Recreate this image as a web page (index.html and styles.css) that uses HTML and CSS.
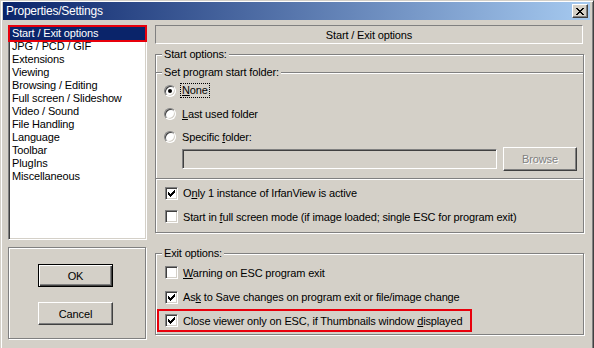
FILE: index.html
```html
<!DOCTYPE html>
<html lang="en">
<head>
    <meta charset="UTF-8">
    <title>Properties/Settings</title>
    <link rel="stylesheet" href="styles.css">
</head>
<body>
    <div class="window">
        <div class="titlebar">
            <span class="title">Properties/Settings</span>
            <span class="close">
                <svg width="8" height="7" viewBox="0 0 8 7"><path d="M0 0h2v1h-2z M6 0h2v1h-2z M1 1h2v1h-2z M5 1h2v1h-2z M2 2h4v1h-4z M3 3h2v1h-2z M2 4h4v1h-4z M1 5h2v1h-2z M5 5h2v1h-2z M0 6h2v1h-2z M6 6h2v1h-2z" fill="#000"/></svg>
            </span>
        </div>
        <div class="dlg">
            <div class="side">
                <ul class="listbox">
                    <li class="sel">Start / Exit options</li>
                    <li>JPG / PCD / GIF</li>
                    <li>Extensions</li>
                    <li>Viewing</li>
                    <li>Browsing / Editing</li>
                    <li>Full screen / Slideshow</li>
                    <li>Video / Sound</li>
                    <li>File Handling</li>
                    <li>Language</li>
                    <li>Toolbar</li>
                    <li>PlugIns</li>
                    <li>Miscellaneous</li>
                </ul>
                <div class="btnpanel etched">
                    <div class="btn default">OK</div>
                    <div class="btn">Cancel</div>
                </div>
            </div>
            <div class="main">
                <div class="header">Start / Exit options</div>

                <!-- start options -->
                <div class="group etched start">
                    <div class="legend">Start options:</div>
                    <div class="subgroup">
                        <div class="legend">Set program start folder:</div>
                        <div class="row r1"><span class="radio on"></span><span class="focus"><u>N</u>one</span></div>
                        <div class="row r2"><span class="radio"></span><span><u>L</u>ast used folder</span></div>
                        <div class="row r3"><span class="radio"></span><span>Specific <u>f</u>older:</span></div>
                        <div class="folder">
                            <div class="input"></div>
                            <div class="btn disabled">Browse</div>
                        </div>
                    </div>
                    <div class="row chk c1"><span class="check"><svg class="tick" width="7" height="7" viewBox="0 0 7 7"><path d="M0 2h1v3h-1z M1 3h1v3h-1z M2 4h1v3h-1z M3 3h1v3h-1z M4 2h1v3h-1z M5 1h1v3h-1z M6 0h1v3h-1z"/></svg></span><span>O<u>n</u>ly 1 instance of IrfanView is active</span></div>
                    <div class="row chk c2"><span class="check"></span><span>Start in <u>f</u>ull screen mode (if image loaded; single ESC for program exit)</span></div>
                </div>

                <!-- exit options -->
                <div class="group etched exit">
                    <div class="legend">Exit options:</div>
                    <div class="row chk e1"><span class="check"></span><span><u>W</u>arning on ESC program exit</span></div>
                    <div class="row chk e2"><span class="check"><svg class="tick" width="7" height="7" viewBox="0 0 7 7"><path d="M0 2h1v3h-1z M1 3h1v3h-1z M2 4h1v3h-1z M3 3h1v3h-1z M4 2h1v3h-1z M5 1h1v3h-1z M6 0h1v3h-1z"/></svg></span><span>As<u>k</u> to Save changes on program exit or file/image change</span></div>
                    <div class="row chk e3 marked"><span class="check"><svg class="tick" width="7" height="7" viewBox="0 0 7 7"><path d="M0 2h1v3h-1z M1 3h1v3h-1z M2 4h1v3h-1z M3 3h1v3h-1z M4 2h1v3h-1z M5 1h1v3h-1z M6 0h1v3h-1z"/></svg></span><span>Close viewer only on ESC, if Thumbnails window <u>d</u>isplayed</span></div>
                </div>
            </div>
        </div>
    </div>
</body>
</html>
```

FILE: styles.css
```css
* {
    box-sizing: border-box;
}
body {
    margin: 0;
    height: 348px;
    overflow: hidden;
    background: #d4d0c8;
    font-family: "Liberation Sans", Arial, sans-serif;
    font-size: 11px;
    letter-spacing: -0.15px;
    color: #000;
}
.window {
    width: 594px;
    height: 360px;
    border: 1px solid;
    border-color: #d4d0c8 #404040 #404040 #d4d0c8;
    box-shadow: inset 1px 1px #fff, inset -1px -1px #808080;
    padding: 1px 3px 0 2px;
    background: #d4d0c8;
}
.titlebar {
    height: 18px;
    display: flex;
    align-items: center;
    justify-content: space-between;
    padding: 0 2px 0 3px;
    background: linear-gradient(to right, #0a246a, #a6caf0);
}
.title {
    color: #fff;
    font-size: 12px;
    letter-spacing: -0.25px;
}
.close {
    width: 16px;
    height: 14px;
    display: flex;
    align-items: center;
    justify-content: center;
    background: #d4d0c8;
    border: 1px solid;
    border-color: #fff #404040 #404040 #fff;
    box-shadow: inset -1px -1px #808080;
}
.close svg, .tick {
    display: block;
    shape-rendering: crispEdges;
}
.tick {
    fill: #000;
}

.dlg {
    display: flex;
    gap: 8px;
    padding: 5px 5px 0 5px;
}
.side {
    width: 139px;
    display: flex;
    flex-direction: column;
    gap: 7px;
}
.listbox {
    list-style: none;
    margin: 0;
    padding: 1px;
    height: 215px;
    background: #fff;
    border: 1px solid;
    border-color: #808080 #fff #fff #808080;
    box-shadow: inset 1px 1px #404040, inset -1px -1px #d4d0c8;
}
.listbox li {
    height: 13px;
    line-height: 13px;
    padding-left: 2px;
    white-space: nowrap;
}
.listbox li.sel {
    background: #0a246a;
    color: #fff;
    outline: 2px solid #e8000c;
}
.etched {
    border: 1px solid #808080;
    box-shadow: inset 1px 1px #fff, 1px 1px #fff;
}
.btnpanel {
    height: 92px;
    width: 138px;
    padding: 16px 0 0 29px;
}
.btn {
    width: 75px;
    height: 23px;
    display: flex;
    align-items: center;
    justify-content: center;
    border: 1px solid;
    border-color: #fff #404040 #404040 #fff;
    box-shadow: inset -1px -1px #808080;
}
.btn.default {
    border-color: #000;
    box-shadow: inset 1px 1px #fff, inset -1px -1px #404040, inset -2px -2px #808080;
    margin-bottom: 15px;
}
.btn.disabled {
    width: 74px;
    height: 24px;
    color: #808080;
    text-shadow: 1px 1px #fff;
}

.main {
    width: 430px;
}
.header {
    height: 19px;
    margin-right: 2px;
    display: flex;
    align-items: center;
    justify-content: center;
    border: 1px solid;
    border-color: #808080 #fff #fff #808080;
}
.group {
    margin-right: 1px;
}
.group.start {
    margin-top: 10px;
    padding-bottom: 4px;
}
.group.exit {
    margin-top: 20px;
    padding-bottom: 2px;
}
.legend {
    width: fit-content;
    height: 13px;
    line-height: 13px;
    margin: -7px 0 0 6px;
    padding: 0 2px;
    background: #d4d0c8;
}
.subgroup {
    margin-top: 11px;
    padding-bottom: 7px;
    border-top: 1px solid #808080;
    border-bottom: 1px solid #808080;
    box-shadow: inset 0 1px #fff, 0 1px #fff;
}
.row {
    display: flex;
    align-items: center;
    gap: 6px;
    padding-left: 8px;
    white-space: nowrap;
}
.row.chk {
    padding-left: 9px;
    gap: 5px;
}
.r1 { height: 23px; }
.r2 { height: 24px; }
.r3 { height: 22px; }
.c1 { height: 24px; margin-top: 2px; }
.c2 { height: 23px; }
.e1 { height: 25px; }
.e2 { height: 24px; }
.e3 { height: 23px; }
.row.marked {
    width: 315px;
    margin-left: 1px;
    padding-left: 6px;
    border: 2px solid #e8000c;
}
.focus {
    border: 1px dotted #000;
    padding: 0 1px;
    margin-left: -2px;
    line-height: 13px;
}
.radio {
    width: 12px;
    height: 12px;
    flex: none;
    display: flex;
    align-items: center;
    justify-content: center;
    border-radius: 50%;
    background: #fff;
    border: 1px solid;
    border-color: #808080 #fff #fff #808080;
    box-shadow: inset 1px 1px #404040, inset -1px -1px #d4d0c8;
}
.radio.on::after {
    content: "";
    width: 4px;
    height: 4px;
    border-radius: 50%;
    background: #000;
}
.check {
    width: 13px;
    height: 13px;
    flex: none;
    display: flex;
    align-items: center;
    justify-content: center;
    background: #fff;
    border: 1px solid;
    border-color: #808080 #fff #fff #808080;
    box-shadow: inset 1px 1px #404040, inset -1px -1px #d4d0c8;
}
.folder {
    display: flex;
    align-items: center;
    gap: 6px;
    margin-top: -1px;
    padding-left: 26px;
}
.input {
    width: 315px;
    height: 20px;
    background: #d4d0c8;
    border: 1px solid;
    border-color: #808080 #fff #fff #808080;
    box-shadow: inset 1px 1px #404040, inset -1px -1px #d4d0c8;
}
```
